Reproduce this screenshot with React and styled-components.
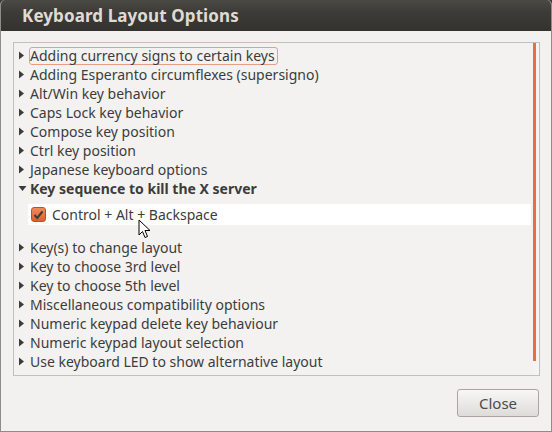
import React from "react";
import styled, { createGlobalStyle } from "styled-components";

const options = [
  "Adding currency signs to certain keys",
  "Adding Esperanto circumflexes (supersigno)",
  "Alt/Win key behavior",
  "Caps Lock key behavior",
  "Compose key position",
  "Ctrl key position",
  "Japanese keyboard options",
];

const moreOptions = [
  "Key(s) to change layout",
  "Key to choose 3rd level",
  "Key to choose 5th level",
  "Miscellaneous compatibility options",
  "Numeric keypad delete key behaviour",
  "Numeric keypad layout selection",
  "Use keyboard LED to show alternative layout",
  "Using space key to input non-breakable space character",
];

const GlobalStyle = createGlobalStyle`
  html, body {
    margin: 0;
    padding: 0;
    width: 552px;
    height: 432px;
    overflow: hidden;
    background: #3a3935;
  }
`;

const Window = styled.div`
  position: relative;
  width: 552px;
  height: 432px;
  box-sizing: border-box;
  display: flex;
  flex-direction: column;
  background: #f2f1f0;
  border: 1px solid #8f8d89;
  border-top: none;
  border-radius: 5px 5px 0 0;
  overflow: hidden;
  font-family: "Noto Sans", "Open Sans", sans-serif;
  color: #3c3c3c;
`;

const TitleBar = styled.div`
  height: 31px;
  flex-shrink: 0;
  display: flex;
  align-items: center;
  padding-left: 21px;
  background: linear-gradient(#4a4944, #3c3b37 40%, #33322e);
  color: #dfdbd2;
  font-size: 17px;
  font-weight: bold;
  letter-spacing: 0.1px;
`;

const Body = styled.div`
  flex: 1;
  display: flex;
  flex-direction: column;
  padding: 11px 11px 0 12px;
`;

const ListBox = styled.div`
  height: 334px;
  box-sizing: border-box;
  display: flex;
  border: 1px solid #c2c0bc;
  background: #f3f2f1;
  overflow: hidden;
`;

const Tree = styled.div`
  flex: 1;
  display: flex;
  flex-direction: column;
  padding: 3px 0 0 3px;
  overflow: hidden;
  min-width: 0;
`;

const Row = styled.div`
  height: 19px;
  flex-shrink: 0;
  display: flex;
  align-items: center;
  font-size: 14px;
  white-space: nowrap;
  font-weight: ${(p) => (p.$bold ? "bold" : "normal")};
`;

const Arrow = styled.span`
  width: 12px;
  flex-shrink: 0;
  display: flex;
  align-items: center;
  padding-left: 1px;
`;

const Label = styled.span`
  padding: 0 2px 0 0;
  line-height: 16px;
  border: 1px solid ${(p) => (p.$focus ? "#e59f87" : "transparent")};
  border-radius: 3px;
  margin-left: -1px;
`;

const CheckRow = styled.div`
  height: 21px;
  flex-shrink: 0;
  display: flex;
  align-items: center;
  gap: 6px;
  margin: 6px 2px 13px 11px;
  padding-left: 3px;
  background: #ffffff;
  font-size: 14px;
`;

const CheckBox = styled.span`
  width: 15px;
  height: 15px;
  box-sizing: border-box;
  display: flex;
  align-items: center;
  justify-content: center;
  border: 1px solid #b9522a;
  border-radius: 3px;
  background: linear-gradient(#f08a5d, #dd5f2f);
`;

const ScrollTrack = styled.div`
  width: 6px;
  flex-shrink: 0;
  display: flex;
  flex-direction: column;
  background: #f6f4f3;
`;

const ScrollThumb = styled.div`
  height: 318px;
  width: 3px;
  background: #e0743f;
`;

const Footer = styled.div`
  flex: 1;
  display: flex;
  justify-content: flex-end;
  align-items: flex-start;
  padding-top: 13px;
`;

const Button = styled.button`
  width: 82px;
  height: 28px;
  margin-right: 1px;
  border: 1px solid #a9a6a1;
  border-radius: 3px;
  background: linear-gradient(#f8f7f6, #dedcd8);
  color: #4c4c4c;
  font-family: "Noto Sans", "Open Sans", sans-serif;
  font-size: 15px;
  padding: 0;
`;

const Cursor = styled.svg`
  position: absolute;
  left: 137px;
  top: 219px;
`;

const RightArrow = () => (
  <svg width="7" height="9" viewBox="0 0 7 9">
    <path d="M1 0.5 L6 4.5 L1 8.5 Z" fill="#3c3c3c" />
  </svg>
);

const DownArrow = () => (
  <svg width="9" height="7" viewBox="0 0 9 7">
    <path d="M0.5 1 L8.5 1 L4.5 6 Z" fill="#3c3c3c" />
  </svg>
);

const App = () => {
  return (
    <>
      <GlobalStyle />
      <Window>
        <TitleBar>Keyboard Layout Options</TitleBar>
        <Body>
          <ListBox>
            <Tree>
              {options.map((name, i) => (
                <Row key={name}>
                  <Arrow>
                    <RightArrow />
                  </Arrow>
                  <Label $focus={i === 0}>{name}</Label>
                </Row>
              ))}
              <Row $bold>
                <Arrow>
                  <DownArrow />
                </Arrow>
                <Label>Key sequence to kill the X server</Label>
              </Row>
              <CheckRow>
                <CheckBox>
                  <svg width="11" height="10" viewBox="0 0 11 10">
                    <path
                      d="M1.5 5 L4.2 8 L9.5 1.5"
                      fill="none"
                      stroke="#3b3b3b"
                      strokeWidth="2"
                    />
                  </svg>
                </CheckBox>
                Control + Alt + Backspace
              </CheckRow>
              {moreOptions.map((name) => (
                <Row key={name}>
                  <Arrow>
                    <RightArrow />
                  </Arrow>
                  <Label>{name}</Label>
                </Row>
              ))}
            </Tree>
            <ScrollTrack>
              <ScrollThumb />
            </ScrollTrack>
          </ListBox>
          <Footer>
            <Button>Close</Button>
          </Footer>
        </Body>
        <Cursor width="13" height="20" viewBox="0 0 13 20">
          <path
            d="M1 1 L1 16 L4.5 12.5 L7 18.5 L9.5 17.5 L7 11.5 L12 11.5 Z"
            fill="#ffffff"
            stroke="#000000"
            strokeWidth="1"
            strokeLinejoin="round"
          />
        </Cursor>
      </Window>
    </>
  );
};

export default App;
